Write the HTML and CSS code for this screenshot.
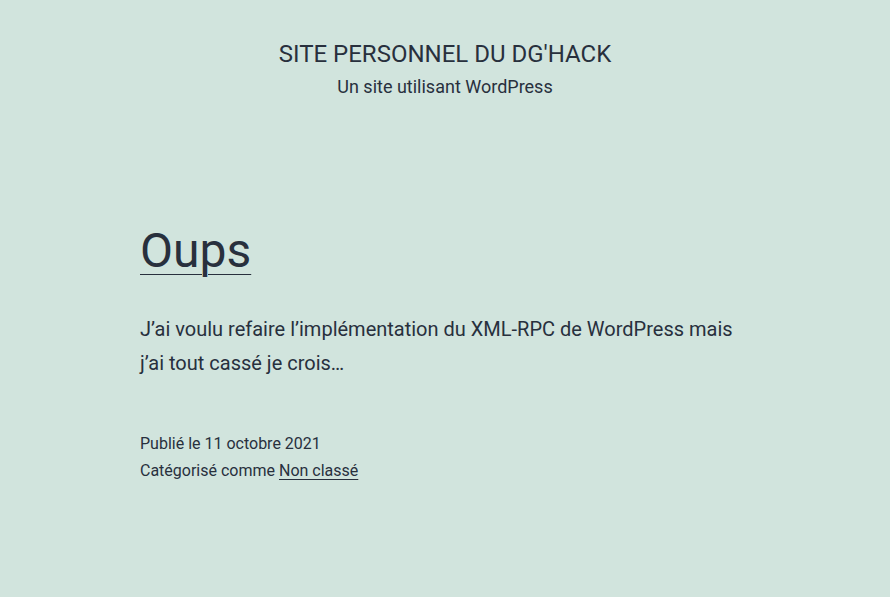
FILE: index.html
```html
<!DOCTYPE html>
<html lang="fr">
<head>
<meta charset="utf-8">
<title>Site personnel du DG'hack</title>
<link rel="stylesheet" href="styles.css">
</head>
<body>
<header class="site-header">
  <p class="site-title"><a href="#">SITE PERSONNEL DU DG'HACK</a></p>
  <p class="site-description">Un site utilisant WordPress</p>
</header>
<main class="site-main">
  <article class="entry">
    <h1 class="entry-title"><a href="#">Oups</a></h1>
    <div class="entry-content">
      <p>J’ai voulu refaire l’implémentation du XML-RPC de WordPress mais j’ai tout cassé je crois…</p>
    </div>
    <footer class="entry-footer">
      <span class="posted-on">Publié le 11 octobre 2021</span>
      <span class="cat-links">Catégorisé comme <a href="#">Non classé</a></span>
    </footer>
  </article>
</main>
</body>
</html>
```
FILE: styles.css
```css
* { box-sizing: border-box; }
html, body {
  margin: 0;
  padding: 0;
  background: #d1e4dd;
  color: #28303d;
  font-family: Roboto, "Noto Sans", sans-serif;
}
a { color: #28303d; }
.site-header {
  display: flex;
  flex-direction: column;
  align-items: center;
  padding-top: 38px;
}
.site-title {
  margin: 0;
  font-size: 24px;
  line-height: 32px;
}
.site-title a { text-decoration: none; }
.site-description {
  margin: 4px 0 0;
  font-size: 18px;
  line-height: 26px;
}
.site-main {
  width: 610px;
  margin: 0 auto;
  padding-top: 119px;
}
.entry-title {
  margin: 0;
  font-size: 48px;
  font-weight: 400;
  line-height: 64px;
}
.entry-title a {
  text-decoration: underline;
  text-decoration-thickness: 1px;
  text-underline-offset: 7px;
}
.entry-content p {
  margin: 29px 0 0;
  font-size: 20px;
  line-height: 34px;
}
.entry-footer {
  display: flex;
  flex-direction: column;
  margin-top: 50px;
  font-size: 16px;
  line-height: 27px;
}
.entry-footer a {
  text-decoration-thickness: 1px;
  text-underline-offset: 3px;
}
```
